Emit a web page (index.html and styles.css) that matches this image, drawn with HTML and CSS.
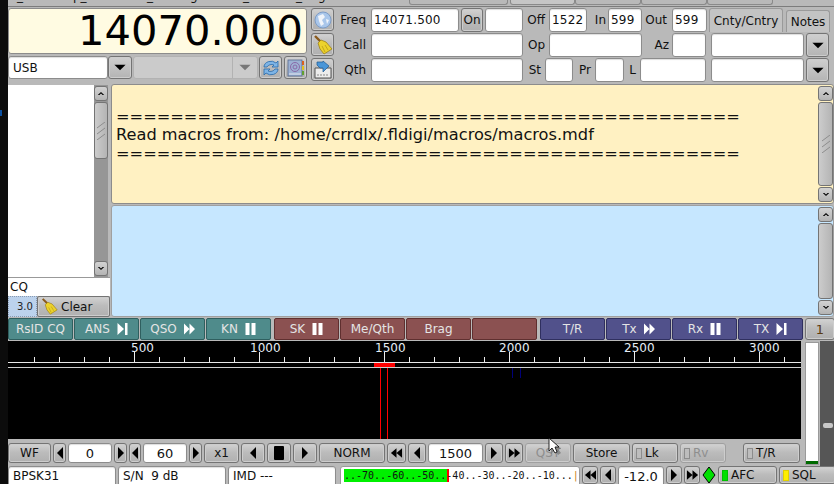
FILE: index.html
```html
<!DOCTYPE html>
<html lang="en">
<head>
<meta charset="utf-8">
<title>fldigi</title>
<link rel="stylesheet" href="styles.css">
</head>
<body>
<svg class="defs" aria-hidden="true">
  <symbol id="i-left" viewBox="0 0 10 14"><path d="M8 1V13L2 7Z"/></symbol>
  <symbol id="i-right" viewBox="0 0 10 14"><path d="M2 1V13L8 7Z"/></symbol>
  <symbol id="i-dleft" viewBox="0 0 14 14"><path d="M7 2V12L1 7ZM13 2V12L7 7Z"/></symbol>
  <symbol id="i-dright" viewBox="0 0 14 14"><path d="M1 2V12L7 7ZM7 2V12L13 7Z"/></symbol>
  <symbol id="i-down" viewBox="0 0 20 10"><path d="M2 1H18L10 9Z"/></symbol>
  <symbol id="i-chev-up" viewBox="0 0 10 6"><path d="M1 5L5 1L9 5H7L5 3L3 5Z"/></symbol>
  <symbol id="i-chev-down" viewBox="0 0 10 6"><path d="M1 1L5 5L9 1H7L5 3L3 1Z"/></symbol>
  <symbol id="i-skip" viewBox="0 0 10 12"><path d="M0 0L6.500 6L0 12ZM7.500 0H10V12H7.500Z"/></symbol>
  <symbol id="i-ff" viewBox="0 0 12 12"><path d="M0 0L6 6L0 12ZM6 0L12 6L6 12Z"/></symbol>
  <symbol id="i-pause" viewBox="0 0 10 12"><path d="M0 0H4V12H0ZM6 0H10V12H6Z"/></symbol>
  <symbol id="i-grip" viewBox="0 0 10 18"><path d="M1 6L9 0M1 12L9 6M1 18L9 12" fill="none" stroke="#8c8c8c"/></symbol>
  <symbol id="i-broom" viewBox="0 0 20 20">
    <path d="M2 1L9 8" stroke="#8a5a1c" stroke-width="2.4" fill="none"/>
    <path d="M8 5L13 7L19 14L11 19L7 14L5 8Z" fill="#ecd22c" stroke="#96780f" stroke-width=".7"/>
    <path d="M9 11L12 17M12 10L15 15" stroke="#b09510" stroke-width=".7" fill="none"/>
  </symbol>
</svg>

<div class="edge"><span class="edge-mark"></span></div>
<div class="app">
  <div class="menu">
    <span class="mu">_</span><span class="mu">p_</span><span class="mu">_</span><span class="mu">g</span><span class="mu">_</span><span class="mu">_</span><span class="mu">g</span>
    <span class="mtab m-a"></span><span class="mtab m-b"></span><span class="mtab m-c"></span><span class="mtab"></span><span class="mtab"></span><span class="mtab"></span>
  </div>

  <div class="top">
    <div class="station">
      <div class="station-left">
        <div class="freq">14070.000</div>
        <div class="mode-row">
          <div class="input w100 txt">USB</div>
          <button class="btn arrow-btn w24"><svg class="ic-down"><use href="#i-down"/></svg></button>
          <div class="dis-choice"><span class="dis-field"></span><span class="dis-arrow"><svg class="ic-down ic-grey"><use href="#i-down"/></svg></span></div>
          <button class="btn ibtn w23 mode-a">
            <svg viewBox="0 0 20 20" class="ic20"><path d="M3 9A7 6 0 0 1 15 5L17 3V9H11L13 7A5 4 0 0 0 6 9Z" fill="#7db4e6" stroke="#2a6aa8" stroke-width=".8"/><path d="M17 11A7 6 0 0 1 5 15L3 17V11H9L7 13A5 4 0 0 0 14 11Z" fill="#7db4e6" stroke="#2a6aa8" stroke-width=".8"/></svg>
          </button>
          <button class="btn ibtn w23">
            <svg viewBox="0 0 20 20" class="ic20"><rect x="2" y="2" width="14" height="16" fill="#9db2d4" stroke="#56698e" stroke-width=".8"/><circle cx="9" cy="9" r="4.500" fill="none" stroke="#8a6aa8"/><circle cx="9" cy="9" r="2" fill="none" stroke="#8a6aa8"/><path d="M3 16H15" stroke="#e4e8f0"/><rect x="16" y="3" width="2" height="4" fill="#d86020"/><rect x="16" y="8" width="2" height="4" fill="#e0c020"/><rect x="16" y="13" width="2" height="4" fill="#60a030"/></svg>
          </button>
        </div>
      </div>
      <div class="station-icons">
        <button class="btn ibtn icon-sq">
          <svg viewBox="0 0 20 20" class="ic20"><circle cx="10" cy="10" r="8" fill="#a9c6ea" stroke="#7d9cc6"/><path d="M5 6L10 4L12 7L9 10L11 14L8 16L6 11ZM13 9L16 10L14 14Z" fill="#f0f4fa"/></svg>
        </button>
        <button class="btn ibtn icon-sq"><svg class="ic20"><use href="#i-broom"/></svg></button>
        <button class="btn ibtn icon-sq">
          <svg viewBox="0 0 20 20" class="ic20"><path d="M2 8H18V18H2Z" fill="#ececec" stroke="#555"/><path d="M4 15H16" stroke="#888" stroke-dasharray="2 1"/><path d="M4 2H10V1L16 6L10 12V8H7L4 5Z" fill="#4a96d8" stroke="#205a90" stroke-width=".7"/></svg>
        </button>
      </div>
    </div>

    <div class="fields">
      <div class="frow">
        <label class="lbl l-main">Freq</label>
        <div class="input num w88">14071.500</div>
        <button class="btn on-btn">On</button>
        <div class="input w38"></div>
        <label class="lbl l-off">Off</label>
        <div class="input num w38">1522</div>
        <label class="lbl l-in">In</label>
        <div class="input num w34">599</div>
        <label class="lbl l-out">Out</label>
        <div class="input num w35">599</div>
        <div class="tab tab-active">Cnty/Cntry</div>
        <div class="tab tab-notes">Notes</div>
      </div>
      <div class="frow">
        <label class="lbl l-main">Call</label>
        <div class="input w152"></div>
        <label class="lbl l-off">Op</label>
        <div class="input w93"></div>
        <label class="lbl l-az">Az</label>
        <div class="input w34"></div>
        <div class="input w93 ml3"></div>
        <button class="btn arrow-btn w23"><svg class="ic-down"><use href="#i-down"/></svg></button>
      </div>
      <div class="frow">
        <label class="lbl l-main">Qth</label>
        <div class="input w152"></div>
        <label class="lbl l-st">St</label>
        <div class="input w28"></div>
        <label class="lbl l-st">Pr</label>
        <div class="input w29"></div>
        <label class="lbl l-l">L</label>
        <div class="input w66"></div>
        <div class="input w93 ml3"></div>
        <button class="btn arrow-btn w23"><svg class="ic-down"><use href="#i-down"/></svg></button>
      </div>
    </div>
  </div>

  <div class="main">
    <div class="side">
      <div class="list-wrap">
        <div class="list"></div>
        <div class="sb">
          <div class="sb-btn"><svg class="chev"><use href="#i-chev-up"/></svg></div>
          <div class="sb-thumb sb-thumb-left"><svg class="grip"><use href="#i-grip"/></svg></div>
          <div class="sb-fill"></div>
          <div class="sb-btn"><svg class="chev"><use href="#i-chev-down"/></svg></div>
        </div>
      </div>
      <div class="cq">CQ</div>
      <div class="clear-row">
        <div class="ver">3.0</div>
        <button class="btn clear-btn"><svg class="ic16"><use href="#i-broom"/></svg>Clear</button>
      </div>
    </div>
    <div class="panes">
      <div class="pane rx">
        <div class="pane-text">
<br>==============================================<br>Read macros from: /home/crrdlx/.fldigi/macros/macros.mdf<br>==============================================
        </div>
        <div class="sb">
          <div class="sb-btn"><svg class="chev"><use href="#i-chev-up"/></svg></div>
          <div class="sb-thumb sb-thumb-grow"><svg class="grip"><use href="#i-grip"/></svg></div>
          <div class="sb-btn"><svg class="chev"><use href="#i-chev-down"/></svg></div>
        </div>
      </div>
      <div class="pane tx">
        <div class="pane-text"></div>
        <div class="sb">
          <div class="sb-btn"><svg class="chev"><use href="#i-chev-up"/></svg></div>
          <div class="sb-thumb sb-thumb-grow"></div>
          <div class="sb-btn"><svg class="chev"><use href="#i-chev-down"/></svg></div>
        </div>
      </div>
    </div>
  </div>

  <div class="macros">
    <button class="mac teal">RsID CQ</button>
    <button class="mac teal">ANS<svg class="mg"><use href="#i-skip"/></svg></button>
    <button class="mac teal">QSO<svg class="mg"><use href="#i-ff"/></svg></button>
    <button class="mac teal">KN<svg class="mg"><use href="#i-pause"/></svg></button>
    <button class="mac red mac-sep">SK<svg class="mg"><use href="#i-pause"/></svg></button>
    <button class="mac red">Me/Qth</button>
    <button class="mac red">Brag</button>
    <button class="mac red"></button>
    <button class="mac blue mac-sep">T/R</button>
    <button class="mac blue">Tx<svg class="mg"><use href="#i-ff"/></svg></button>
    <button class="mac blue">Rx<svg class="mg"><use href="#i-pause"/></svg></button>
    <button class="mac blue">TX<svg class="mg"><use href="#i-skip"/></svg></button>
    <button class="btn mac-num">1</button>
  </div>

  <div class="wf-area">
    <div class="wf-col">
      <svg class="waterfall" viewBox="0 0 793 98">
        <rect width="793" height="98" fill="#000"/>
        <g class="scale-text">
          <text x="123" y="11">500</text>
          <text x="242" y="11">1000</text>
          <text x="367" y="11">1500</text>
          <text x="491" y="11">2000</text>
          <text x="616" y="11">2500</text>
          <text x="741" y="11">3000</text>
        </g>
        <path d="M26.500 16V21M51.500 16V21M76.500 16V21M101.500 16V21M126.500 11V21M151.500 16V21M176.500 16V21M201.500 16V21M226.500 16V21M251.500 11V21M276.500 16V21M301.500 16V21M326.500 16V21M351.500 16V21M376.500 11V21M401.500 16V21M426.500 16V21M451.500 16V21M476.500 16V21M501.500 11V21M526.500 16V21M551.500 16V21M576.500 16V21M601.500 16V21M626.500 11V21M651.500 16V21M676.500 16V21M701.500 16V21M726.500 16V21M751.500 11V21M776.500 16V21" stroke="#eee" fill="none"/>
        <path d="M0 21.500H793" stroke="#e8e8e8"/>
        <path d="M0 26.500H793" stroke="#cfcfcf"/>
        <rect x="366" y="22" width="21" height="4" fill="#f00"/>
        <path d="M372.500 27V98M379.500 27V98" stroke="#f00"/>
        <path d="M504.500 27V37M512.500 27V37" stroke="#00007a"/>
      </svg>
      <div class="ctrls">
        <button class="btn w43">WF</button>
        <button class="btn w13 tiny"><svg class="ar"><use href="#i-left"/></svg></button>
        <div class="input val w44">0</div>
        <button class="btn w13 tiny"><svg class="ar"><use href="#i-right"/></svg></button>
        <button class="btn w12 tiny"><svg class="ar"><use href="#i-left"/></svg></button>
        <div class="input val w44">60</div>
        <button class="btn w13 tiny"><svg class="ar"><use href="#i-right"/></svg></button>
        <button class="btn w35">x1</button>
        <button class="btn w24 tiny"><svg class="ar"><use href="#i-left"/></svg></button>
        <button class="btn w24 tiny"><span class="stop"></span></button>
        <button class="btn w24 tiny"><svg class="ar"><use href="#i-right"/></svg></button>
        <button class="btn w66">NORM</button>
        <button class="btn w19 tiny"><svg class="ar2"><use href="#i-dleft"/></svg></button>
        <button class="btn w18 tiny"><svg class="ar"><use href="#i-left"/></svg></button>
        <div class="input val w55">1500</div>
        <button class="btn w18 tiny"><svg class="ar"><use href="#i-right"/></svg></button>
        <button class="btn w18 tiny"><svg class="ar2"><use href="#i-dright"/></svg></button>
        <button class="btn w46 disabled">QSY</button>
        <button class="btn w57">Store</button>
        <button class="btn w46 lit"><span class="led"></span>Lk</button>
        <button class="btn w46 lit disabled"><span class="led"></span>Rv</button>
        <button class="btn w57 lit ml15"><span class="led"></span>T/R</button>
      </div>
    </div>
    <div class="vu"><span class="vu-green"></span></div>
    <div class="slider"><span class="knob"></span></div>
  </div>

  <div class="status">
    <div class="input st w108">BPSK31</div>
    <div class="input st w108">S/N&nbsp; 9 dB</div>
    <div class="input st w108">IMD ---</div>
    <div class="meter">
      <span class="meter-green"></span>
      <span class="meter-mark"></span>
      <span class="meter-text">..-70..-60..-50..-40..-30..-20..-10...<i class="meter-end">|</i></span>
    </div>
    <button class="btn w16 tiny"><svg class="ar2"><use href="#i-dleft"/></svg></button>
    <button class="btn w16 tiny"><svg class="ar"><use href="#i-left"/></svg></button>
    <div class="input val w46">-12.0</div>
    <button class="btn w16 tiny"><svg class="ar"><use href="#i-right"/></svg></button>
    <button class="btn w16 tiny"><svg class="ar2"><use href="#i-dright"/></svg></button>
    <div class="diamond-wrap"><svg viewBox="0 0 14 18" class="diamond"><path d="M7 1L13 9L7 17L1 9Z" fill="#00e000" stroke="#000"/></svg></div>
    <button class="btn w59 lit"><span class="led led-green"></span>AFC</button>
    <button class="btn w57 lit"><span class="led led-yellow"></span>SQL</button>
  </div>
</div>

<svg class="cursor" viewBox="0 0 13 18"><path d="M3 3V17L7 13L10 18L13 16L10 12H14Z" fill="#555" opacity=".5"/><path d="M1 1V14L4 11L7 16L9 15L7 10H11Z" fill="#fff" stroke="#111" stroke-width=".9"/></svg>
</body>
</html>
```

FILE: styles.css
```css
* { box-sizing: border-box; }
html, body { margin: 0; padding: 0; height: 484px; width: 834px; overflow: hidden; }
body {
  display: flex;
  background: #0c0c0c;
  font: 12px "DejaVu Sans", sans-serif;
  color: #111;
  position: relative;
}
.defs { position: absolute; width: 0; height: 0; }
.edge { width: 8px; flex: none; padding-top: 110px; }
.edge-mark { display: block; width: 2px; height: 6px; background: #0a4fa0; }
.app { width: 826px; height: 484px; flex: none; display: flex; flex-direction: column; background: #b9b9b9; overflow: hidden; }

/* generic widgets */
.btn {
  display: flex; align-items: center; justify-content: center;
  padding: 0; height: 100%; flex: none;
  font: 12px "DejaVu Sans", sans-serif; color: #111;
  border: 1px solid #747474; border-radius: 3px;
  background: linear-gradient(#d2d2d2, #bcbcbc 45%, #b0b0b0);
  box-shadow: inset 0 0 0 1px #cdcdcd;
}
.input {
  flex: none; height: 100%;
  background: #fff;
  border: 1px solid #8c8c8c; border-radius: 3px;
  box-shadow: inset 0 1px 1px #ddd;
  line-height: 1; display: flex; align-items: center;
  font-size: 12px; white-space: nowrap; overflow: hidden;
}
.txt { padding-left: 4px; }
.num { padding-left: 2px; letter-spacing: .2px; }
.val { justify-content: center; font-size: 13px; }
.w12 { width: 12px; } .w13 { width: 13px; } .w16 { width: 16px; } .w18 { width: 18px; } .w19 { width: 19px; }
.w23 { width: 23px; } .w24 { width: 24px; } .w28 { width: 28px; } .w29 { width: 29px; }
.w34 { width: 34px; } .w35 { width: 35px; } .w38 { width: 38px; } .w43 { width: 43px; } .w44 { width: 44px; }
.w46 { width: 46px; } .w55 { width: 55px; } .w57 { width: 57px; } .w59 { width: 59px; } .w66 { width: 66px; }
.w88 { width: 88px; } .w93 { width: 93px; } .w100 { width: 100px; } .w108 { width: 108px; } .w152 { width: 152px; }
.ml3 { margin-left: 3px; } .ml15 { margin-left: 15px; }

/* cropped menu + tab stubs */
.menu {
  height: 7px; flex: none; display: flex; overflow: hidden;
  border-bottom: 1px solid #7c7c7c;
  position: relative;
}
.mu { font-size: 12px; line-height: 12px; margin-top: -10px; width: 8px; flex: none; }
.mu:nth-child(1) { margin-left: 9px; }
.mu:nth-child(2) { margin-left: 48px; width: 22px; }
.mu:nth-child(3) { margin-left: 52px; }
.mu:nth-child(4) { margin-left: 35px; }
.mu:nth-child(5) { margin-left: 45px; }
.mu:nth-child(6) { margin-left: 45px; }
.mu:nth-child(7) { margin-left: 14px; }
.mtab { width: 66px; height: 6px; flex: none; border: 1px solid #8a8a8a; border-top: 0; border-radius: 0 0 3px 3px; margin-top: -1px; }
.m-a { margin-left: 83px; width: 99px; }
.m-b { width: 2px; border: 0; }
.m-c { width: 65px; background: #c6c6c6; }

/* top band */
.top { height: 77px; flex: none; display: flex; padding-top: 1px; }
.station { width: 326px; flex: none; display: flex; gap: 4px; }
.station-left { width: 299px; display: flex; flex-direction: column; gap: 2px; }
.freq {
  height: 46px; flex: none;
  background: #fffbe2; border: 1px solid #8c8c8c; border-radius: 3px;
  font-size: 41.600px; line-height: 43px; text-align: right; padding-right: 3px;
  color: #000; overflow: hidden;
}
.mode-row { height: 23px; display: flex; }
.arrow-btn { background: linear-gradient(#cfcfcf, #b4b4b4); }
.ic-down { width: 14px; height: 7px; fill: #000; }
.ic-grey { fill: #777; }
.dis-choice { width: 125px; margin-left: 1px; display: flex; background: #cbcbcb; border: 1px solid #b2b2b2; border-radius: 3px; flex: none; }
.dis-field { flex: 1; }
.dis-arrow { width: 25px; display: flex; align-items: center; justify-content: center; border-left: 1px solid #b2b2b2; }
.mode-a { margin-left: 1px; margin-right: 2px; }
.ibtn { padding: 0; }
.ic20 { width: 20px; height: 20px; display: block; }
.station-icons { width: 23px; display: flex; flex-direction: column; gap: 2px; }
.icon-sq { height: 23px; width: 23px; }

.fields { margin-left: 4px; flex: 1; display: flex; flex-direction: column; gap: 1px; min-width: 0; }
.frow { height: 24px; display: flex; gap: 2px; flex: none; }
.lbl { flex: none; text-align: right; line-height: 24px; font-size: 12px; height: 24px; white-space: nowrap; }
.l-main { width: 31px; padding-right: 3px; }
.l-off { width: 22px; padding-right: 2px; }
.l-in { width: 17px; }
.l-out { width: 26px; padding-right: 3px; }
.l-az { width: 26px; padding-right: 1px; }
.l-st { width: 18px; padding-right: 2px; }
.l-l { width: 12px; padding-right: 2px; }
.on-btn { width: 22px; }
.tab {
  flex: none; height: 24px; background: #c3c3c3;
  border: 1px solid #9a9a9a; border-bottom: 0; border-radius: 3px 3px 0 0;
  display: flex; align-items: center; justify-content: center; white-space: nowrap;
}
.tab-active { width: 74px; }
.tab-notes { width: 44px; height: 22px; margin-top: 2px; margin-left: 1px; }

/* main band */
.main { height: 233px; flex: none; display: flex; }
.side { width: 103px; flex: none; display: flex; flex-direction: column; padding-top: 1px; }
.list-wrap { height: 192px; display: flex; flex: none; }
.list { width: 86px; background: #fff; flex: none; }
.sb { width: 15px; flex: none; display: flex; flex-direction: column; background: #969696; gap: 1px; padding: 1px 0; }
.sb-btn {
  height: 15px; flex: none; display: flex; align-items: center; justify-content: center;
  border: 1px solid #747474; border-radius: 3px;
  background: linear-gradient(#d2d2d2, #b4b4b4);
}
.chev { width: 8px; height: 5px; fill: #000; }
.sb-thumb {
  display: flex; align-items: center; justify-content: center;
  border: 1px solid #747474; border-radius: 3px;
  background: linear-gradient(90deg, #cccccc, #b4b4b4);
}
.sb-thumb-left { height: 57px; flex: none; }
.sb-thumb-grow { flex: 1; }
.sb-fill { flex: 1; }
.grip { width: 10px; height: 18px; }
.side .sb { width: 14px; }
.cq { width: 102px; height: 19px; flex: none; background: #fff; padding-left: 2px; line-height: 19px; font-size: 12px; border-top: 1px solid #999; }
.clear-row { height: 21px; display: flex; width: 102px; flex: none; }
.ver { width: 29px; flex: none; background: #bcd2ec; text-align: left; padding-left: 8px; line-height: 20px; font-size: 10px; border: 1px dotted #8a9ab0; color: #222; }
.clear-btn { width: 73px; border-radius: 2px; gap: 3px; justify-content: flex-start; padding-left: 3px; font-size: 12px; }
.ic16 { width: 17px; height: 17px; }

.panes { flex: 1; display: flex; flex-direction: column; min-width: 0; }
.pane { display: flex; border: 1px solid #8c8c8c; border-radius: 3px; overflow: hidden; }
.rx { height: 120px; background: #fff1c2; flex: none; }
.tx { height: 112px; background: #c6e7ff; flex: none; margin-top: 1px; border-color: #a0a0a0; }
.pane-text { flex: 1; min-width: 0; font-size: 16.200px; line-height: 18.500px; padding: 4px 0 0 4px; white-space: nowrap; overflow: hidden; color: #111; }
.pane .sb { background: transparent; }
.rx .sb, .tx .sb { margin-right: 0; }

/* macro row */
.macros { height: 24px; flex: none; display: flex; gap: 1px; padding-top: 1px; background: #b9b9b9; }
.mac {
  width: 65px; flex: none; height: 22px; padding: 0;
  border: 1px solid #3d3d4c; border-radius: 2px;
  color: #e4e4e4; font: 12px "DejaVu Sans", sans-serif;
  display: flex; align-items: center; justify-content: center; gap: 7px;
}
.teal { background: #4f8b8b; border-color: #2f5f5f; }
.red { background: #8b5151; border-color: #5f2f2f; }
.blue { background: #51518b; border-color: #2f2f5f; }
.mac-sep { margin-left: 2px; }
.mg { width: 11px; height: 12px; fill: #fff; }
.mac-num { width: 30px; height: 22px; color: #5a3a10; margin-left: 1px; font-size: 13px; }

/* waterfall band */
.wf-area { height: 125px; flex: none; display: flex; }
.wf-col { width: 795px; flex: none; display: flex; flex-direction: column; }
.waterfall { width: 793px; height: 98px; display: block; flex: none; }
.scale-text { font: 12px "DejaVu Sans", sans-serif; fill: #e6eef6; }
.ctrls { height: 20px; margin-top: 4px; flex: none; display: flex; gap: 2px; }
.ar { width: 10px; height: 14px; fill: #000; }
.ar2 { width: 13px; height: 14px; fill: #000; }
.stop { display: block; width: 10px; height: 14px; background: #000; border-radius: 1px; }
.disabled { color: #8e8e8e; border-color: #a0a0a0; }
.lit { justify-content: flex-start; padding-left: 3px; gap: 3px; }
.led { width: 6px; height: 11px; flex: none; border: 1px solid #8c8c8c; background: #bdbdbd; }
.led-green { background: #00e000; border-color: #00c000; }
.led-yellow { background: #ffee00; border-color: #e0d000; }
.vu { width: 14px; margin: 1px 0 0 2px; height: 123px; flex: none; background: #fff; border: 1px solid #9a9a9a; display: flex; flex-direction: column; justify-content: flex-end; }
.vu-green { display: block; height: 3px; background: #006a00; }
.slider { width: 15px; margin-left: 1px; height: 125px; flex: none; background: #565656; display: flex; justify-content: center; padding-top: 82px; }
.knob { display: block; width: 10px; height: 5px; background: #c8c8c8; border-radius: 2px; }

/* status band */
.status { height: 24px; flex: none; display: flex; gap: 2px; }
.st { padding: 0 0 5px 4px; }
.status .btn { height: 18px; }
.status .input { height: 24px; }
.status .val { align-items: flex-start; padding-top: 3px; }
.status .st { align-items: flex-start; padding-top: 3px; font-size: 12px; }
.meter { width: 240px; margin-left: 2px; height: 24px; flex: none; background: #fff; border: 1px solid #9a9a9a; border-radius: 3px; position: relative; overflow: hidden; }
.meter-green { position: absolute; left: 3px; top: 2px; width: 103px; height: 13px; background: #00f000; }
.meter-mark { position: absolute; left: 106px; top: 2px; width: 2px; height: 13px; background: #f00; }
.meter-text { position: absolute; left: 3px; top: 2px; font: 10px/13px "DejaVu Sans Mono", monospace; color: #111; white-space: pre; }
.meter-end { font-style: normal; color: #c88020; }
.diamond-wrap { width: 14px; flex: none; height: 18px; }
.diamond { width: 14px; height: 18px; display: block; }

.cursor { position: absolute; left: 548px; top: 437px; width: 13px; height: 18px; }
.tiny { padding: 0; }
```
